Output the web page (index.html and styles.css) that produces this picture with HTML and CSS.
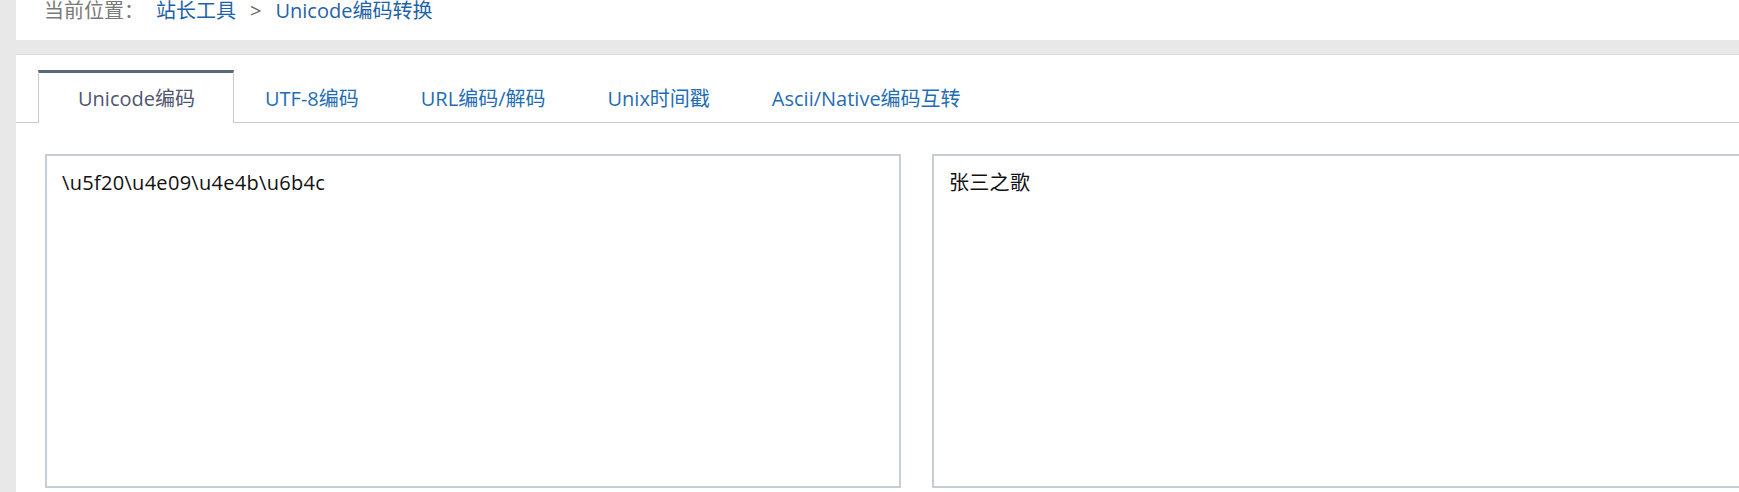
FILE: index.html
```html
<!DOCTYPE html>
<html lang="zh-CN">
<head>
<meta charset="utf-8">
<title>Unicode编码转换</title>
<link rel="stylesheet" href="styles.css">
</head>
<body>
<div class="page">
  <div class="crumbs">
    <span class="crumb-label">当前位置：</span>
    <a class="crumb-link" href="#">站长工具</a>
    <span class="crumb-sep">&gt;</span>
    <a class="crumb-link" href="#">Unicode编码转换</a>
  </div>
  <div class="main">
    <ul class="tabs">
      <li class="tab active"><a href="#">Unicode编码</a></li>
      <li class="tab"><a href="#">UTF-8编码</a></li>
      <li class="tab"><a href="#">URL编码/解码</a></li>
      <li class="tab"><a href="#">Unix时间戳</a></li>
      <li class="tab"><a href="#">Ascii/Native编码互转</a></li>
    </ul>
    <div class="editors">
      <textarea class="box">\u5f20\u4e09\u4e4b\u6b4c</textarea>
      <textarea class="box">张三之歌</textarea>
    </div>
  </div>
</div>
</body>
</html>
```
FILE: styles.css
```css
html, body {
  margin: 0;
  padding: 0;
  overflow: hidden;
  background: #e8e8e8;
}
body {
  font-family: "Open Sans", "Noto Sans CJK SC", sans-serif;
}
.page {
  padding-left: 16px;
}
.crumbs {
  background: #fff;
  height: 40px;
  display: flex;
  align-items: flex-start;
  padding-left: 28px;
  font-size: 20px;
  line-height: 22px;
}
.crumb-label {
  color: #7a7a7a;
  width: 112px;
}
.crumb-link {
  color: #1e63a8;
  text-decoration: none;
}
.crumb-sep {
  color: #666;
  margin: 0 14px;
}
.main {
  margin-top: 14px;
  border-top: 1px solid #dcdcdc;
  background: #fff;
  height: 500px;
  padding-top: 15px;
}
.tabs {
  list-style: none;
  margin: 0;
  padding: 0 0 0 22px;
  display: flex;
  border-bottom: 1px solid #cacaca;
  height: 52px;
}
.tab {
  margin-bottom: -1px;
}
.tab a {
  display: block;
  height: 52px;
  line-height: 52px;
  padding: 0 31px;
  font-size: 20px;
  color: #1f6db4;
  text-decoration: none;
  border-top: 3px solid transparent;
  box-sizing: border-box;
}
.tab.active a {
  color: #4f5670;
  padding: 0 38px 0 39px;
  background: #fff;
  border-top: 3px solid #5a6580;
  border-left: 1px solid #c5ccd6;
  border-right: 1px solid #c5ccd6;
  height: 53px;
}
.editors {
  display: flex;
  gap: 31px;
  padding: 31px 0 0 29px;
}
.box {
  flex: none;
  width: 856px;
  height: 334px;
  box-sizing: border-box;
  border: 2px solid #c6cdd7;
  padding: 12px 15px;
  margin: 0;
  resize: none;
  outline: none;
  font-family: "Open Sans", "Noto Sans CJK SC", sans-serif;
  font-size: 20px;
  line-height: 30px;
  letter-spacing: 0.3px;
  color: #111;
  background: #fff;
}
```
